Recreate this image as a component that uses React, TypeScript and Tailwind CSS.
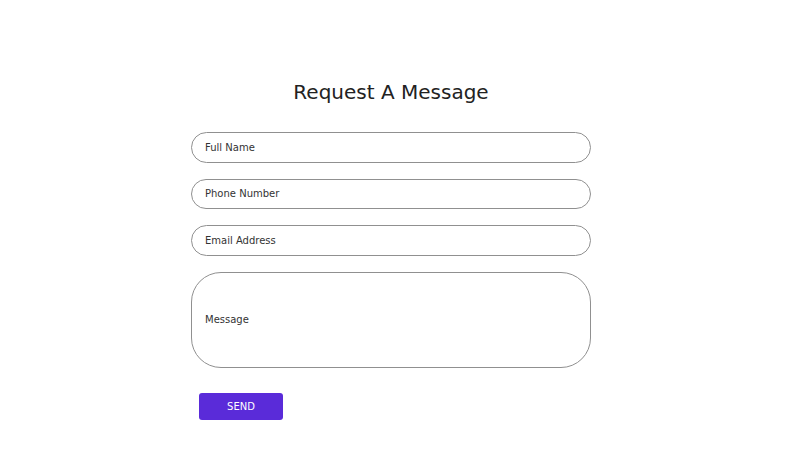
export default function App() {
    const fields = ["Full Name", "Phone Number", "Email Address"];

    return (
        <div className="min-h-[450px] w-full bg-white pr-[18px] font-['DejaVu_Sans',sans-serif]">
            <form className="mx-auto flex w-[400px] flex-col pt-[77px]">
                <h1 className="mb-[25px] text-center text-[20px] leading-[30px] text-[#222]">Request A Message</h1>

                <div className="flex flex-col gap-4">
                    {fields.map((label) => (
                        <input
                            key={label}
                            placeholder={label}
                            className="h-[30.5px] w-full rounded-full border-[1.5px] border-[#909090] px-[13px] text-[10px] text-[#333] outline-none placeholder:text-[#333]"
                        />
                    ))}
                    <div className="flex h-[96px] w-full items-center rounded-[30px] border-[1.5px] border-[#909090] px-[13px]">
                        <textarea
                            placeholder="Message"
                            rows={1}
                            className="w-full resize-none text-[10px] text-[#333] outline-none placeholder:text-[#333]"
                        />
                    </div>
                </div>

                <div className="mt-[25px] pl-[8px]">
                    <button
                        type="button"
                        className="h-[27px] w-[84px] rounded-[3px] bg-[#5a2bd9] text-[10px] text-white"
                    >
                        SEND
                    </button>
                </div>
            </form>
        </div>
    );
}
